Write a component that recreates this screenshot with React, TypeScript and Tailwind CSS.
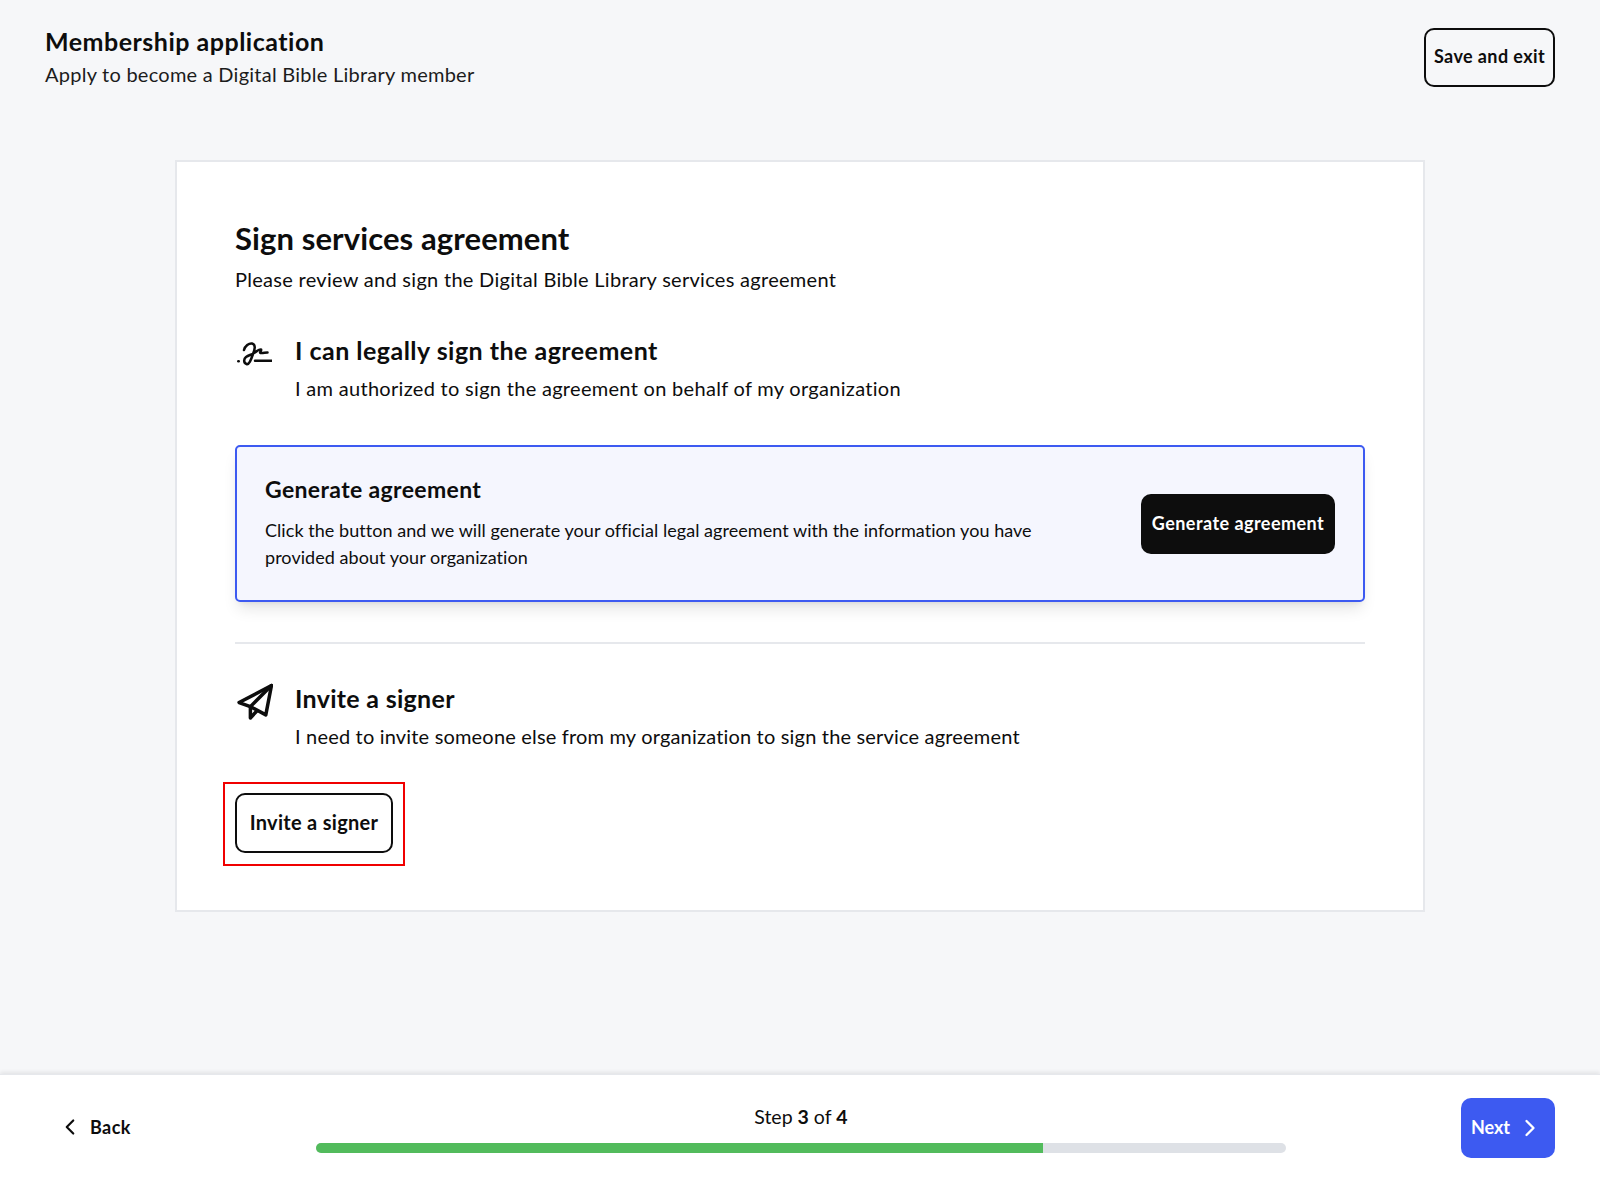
import { ChevronLeft, ChevronRight } from 'lucide-react';

function SignatureIcon() {
  return (
    <svg viewBox="0 0 36 24" className="w-9 h-6" fill="none" stroke="#0d0d0d" strokeWidth="2.500" strokeLinecap="round" strokeLinejoin="round">
      <path d="M2.300 19.300h.4" />
      <path d="M8 8c1-4 5-7 8-6.500 4 1 3 5.500 1 10.500-2 6-4 11-6.500 10-3-1-3-5-.5-7 3-2 5-2 8-4 3-1.800 6-4.500 7-3.500 1 1-2 3-.5 3.500 2 .5 4.500-.5 7-.5" />
      <path d="M19 18.700h17" />
    </svg>
  );
}

function PlaneIcon() {
  return (
    <svg viewBox="0 0 36 36" className="w-[37px] h-[37px]" fill="none" stroke="#0d0d0d" strokeWidth="3.400" strokeLinecap="round" strokeLinejoin="round">
      <path d="M34.500 2.500 3 19l11 4 15 8z" />
      <path d="M34.500 2.500 14 23v11l6-6.500" />
    </svg>
  );
}

export default function App() {
  return (
    <div className="h-[1183px] flex flex-col bg-[#f6f7f9] text-[#0d0d0d] font-['Lato',sans-serif] overflow-hidden">
      {/* Header */}
      <header className="h-[160px] shrink-0 flex justify-between items-start pl-[45px] pr-[45px] pt-[27px]">
        <div className="flex flex-col">
          <h1 className="text-[25px] leading-[28px] font-bold tracking-[0.5px]">Membership application</h1>
          <p className="text-[20px] leading-[24px] mt-[7px] font-normal text-[#1c1c1c] tracking-[0.25px]">Apply to become a Digital Bible Library member</p>
        </div>
        <button className="w-[131px] h-[59px] rounded-[10px] border-2 border-[#0d0d0d] text-[18px] font-bold tracking-[0.4px] mt-[1px] pb-[2px]">Save and exit</button>
      </header>

      {/* Card */}
      <main className="flex-1 flex flex-col items-center">
        <section className="w-[1250px] h-[752px] bg-white border-2 border-[#e6e8ec] px-[58px] pt-[58px]">
          <h2 className="text-[31px] leading-[36px] font-bold tracking-[0.1px]">Sign services agreement</h2>
          <p className="text-[20px] leading-[24px] mt-[11px] tracking-[0.29px]">Please review and sign the Digital Bible Library services agreement</p>

          <div className="flex gap-[24px] mt-[45px]">
            <div className="w-9 pt-[6px] ml-[1px] -mr-[1px]"><SignatureIcon /></div>
            <div>
              <h3 className="text-[25px] leading-[28px] font-bold tracking-[0.48px]">I can legally sign the agreement</h3>
              <p className="text-[20px] leading-[24px] mt-[12px] tracking-[0.3px]">I am authorized to sign the agreement on behalf of my organization</p>
            </div>
          </div>

          <div className="mt-[45px] h-[157px] rounded-[5px] border-2 border-[#3d5af1] bg-[#f5f6fe] shadow-lg flex items-center justify-between pl-[28px] pr-[28px]">
            <div className="w-[800px] -mt-[1px]">
              <h4 className="text-[23px] leading-[28px] font-bold tracking-[0.35px]">Generate agreement</h4>
              <p className="text-[18px] leading-[27.500px] mt-[14px] tracking-[0.05px]">Click the button and we will generate your official legal agreement with the information you have provided about your organization</p>
            </div>
            <button className="w-[194px] h-[60px] rounded-[10px] bg-[#0d0d0d] text-white text-[18px] font-bold tracking-[0.45px]">Generate agreement</button>
          </div>

          <div className="mt-[40px] border-t-2 border-[#e6e8ec]" />

          <div className="flex gap-[24px] mt-[40px]">
            <div className="w-9 -mt-[1px] ml-[1px] -mr-[1px]"><PlaneIcon /></div>
            <div>
              <h3 className="text-[25px] leading-[28px] font-bold tracking-[0.3px]">Invite a signer</h3>
              <p className="text-[20px] leading-[24px] mt-[12px] tracking-[0.18px]">I need to invite someone else from my organization to sign the service agreement</p>
            </div>
          </div>

          {/* highlighted button */}
          <div className="mt-[34px] -ml-[12px] w-[182px] h-[84px] border-2 border-[#f00000] flex items-center justify-center">
            <button className="w-[158px] h-[60px] -mt-[2px] pb-[2px] rounded-[10px] border-2 border-[#0d0d0d] text-[20px] font-bold tracking-[0.3px]">Invite a signer</button>
          </div>
        </section>
      </main>

      {/* Footer */}
      <footer className="h-[109px] shrink-0 bg-white border-t border-[#e6e8ec] shadow-[0_-2px_4px_rgba(0,0,0,0.08)] flex items-center justify-between pl-[57px] pr-[45px] pb-[2px]">
        <button className="flex items-center gap-[7px] text-[18px] font-bold tracking-[0.4px] mb-[2px]">
          <ChevronLeft className="w-[26px] h-[26px]" strokeWidth={2} />
          Back
        </button>
        <div className="w-[970px] ml-[10px] mt-[2px] flex flex-col items-center">
          <p className="text-[19.500px] leading-[24px]">Step <b>3</b> of <b>4</b></p>
          <div className="w-full h-[10px] mt-[14px] rounded-full bg-[#dee1e6] overflow-hidden">
            <div className="w-3/4 h-full bg-[#52bb5c]" />
          </div>
        </div>
        <button className="w-[94px] h-[60px] rounded-[10px] bg-[#3d5af1] text-white text-[18px] font-bold flex items-center justify-center gap-[6px] pr-[1px]">
          <span className="pb-[2px]">Next</span>
          <ChevronRight className="w-[28px] h-[28px]" strokeWidth={2} />
        </button>
      </footer>
    </div>
  );
}
